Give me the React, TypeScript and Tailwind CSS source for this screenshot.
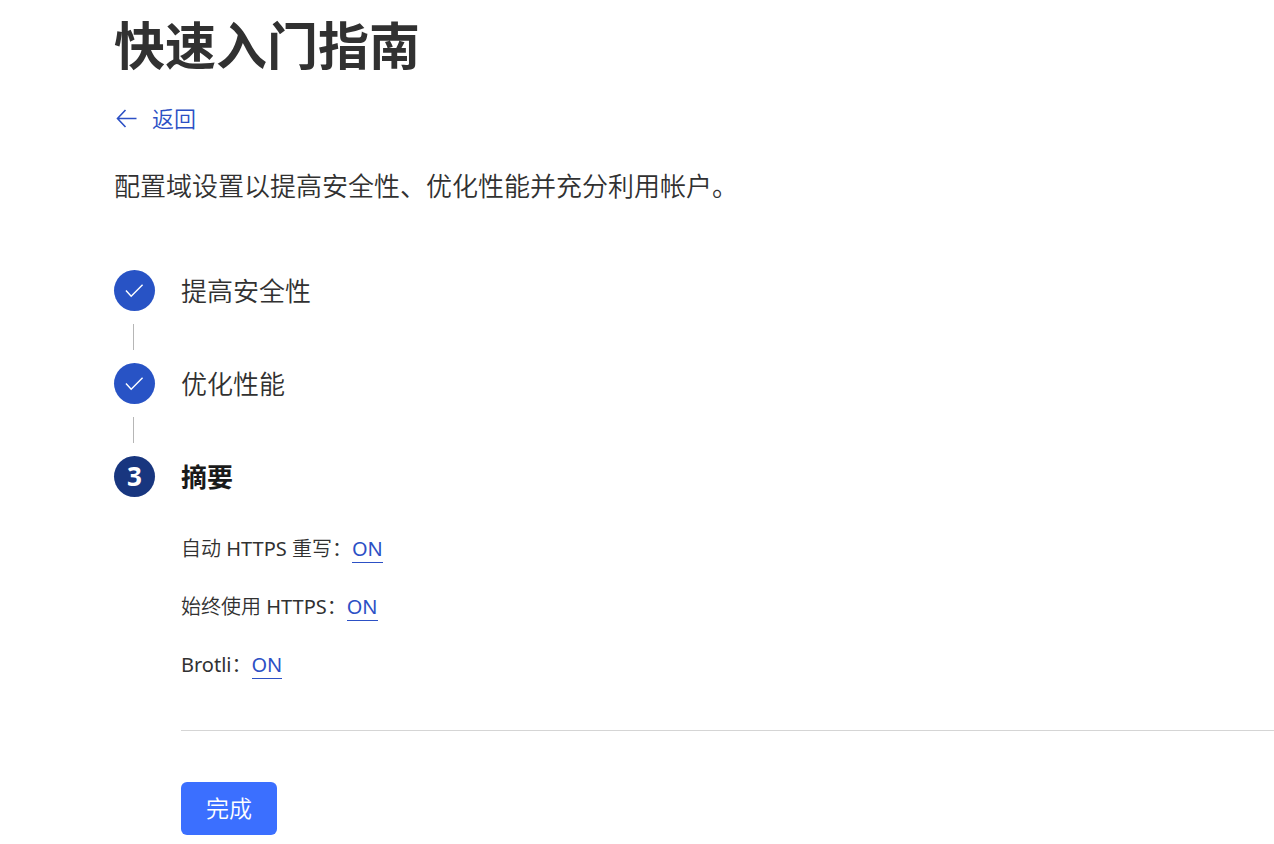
const steps = ["提高安全性", "优化性能"];

const summary = [
  { label: "自动 HTTPS 重写：", value: "ON" },
  { label: "始终使用 HTTPS：", value: "ON" },
  { label: "Brotli：", value: "ON" },
];

function ArrowLeftIcon() {
  return (
    <svg
      className="w-6 h-6"
      viewBox="0 0 24 24"
      fill="none"
      stroke="currentColor"
      strokeWidth="1.6"
      aria-hidden="true"
    >
      <path d="M22.5 12.500H3.500M11.500 4L3.500 12.500l8 8.500" />
    </svg>
  );
}

function CheckIcon() {
  return (
    <svg
      className="w-[19px] h-[19px]"
      viewBox="0 0 20 20"
      fill="none"
      stroke="currentColor"
      strokeWidth="1.5"
      aria-hidden="true"
    >
      <path d="M1 10l5.500 6L18.500 4" />
    </svg>
  );
}

export default function App() {
  return (
    <main className="bg-white pl-[114px] pt-3 pb-2 font-['Noto_Sans','Noto_Sans_CJK_SC_DemiLight','Noto_Sans_CJK_SC',sans-serif] text-[#313131]">
      <h1 className="font-['Noto_Sans','Noto_Sans_CJK_SC',sans-serif] text-[51px] leading-[66px] font-bold">
        快速入门指南
      </h1>

      <a
        href="#"
        className="mt-6 inline-flex items-center gap-[14px] text-[22px] leading-8 text-[#2c50c5]"
      >
        <ArrowLeftIcon />
        返回
      </a>

      <p className="mt-[30px] text-[26px] leading-10">
        配置域设置以提高安全性、优化性能并充分利用帐户。
      </p>

      <ol className="mt-16">
        {steps.map((step) => (
          <li key={step}>
            <div className="flex items-center gap-[26px]">
              <span className="flex w-[41px] h-[41px] items-center justify-center rounded-full bg-[#2853c5] text-white">
                <CheckIcon />
              </span>
              <span className="text-[26px] leading-10">{step}</span>
            </div>
            <div className="my-[13px] ml-[19px] h-[26px] w-px bg-[#b6b6b6]" />
          </li>
        ))}

        <li>
          <div className="flex items-center gap-[26px]">
            <span className="flex w-[41px] h-[41px] items-center justify-center rounded-full bg-[#18367f] text-[26px] font-bold text-white">
              3
            </span>
            <h2 className="font-['Noto_Sans','Noto_Sans_CJK_SC',sans-serif] text-[26px] leading-10 font-bold text-[#1a1a1a]">
              摘要
            </h2>
          </div>

          <div className="ml-[67px] mt-9">
            <ul className="flex flex-col gap-[26px] text-[20px] leading-8">
              {summary.map((item) => (
                <li key={item.label}>
                  {item.label}
                  <a href="#" className="border-b border-[#2c50c5] text-[#2c50c5]">
                    {item.value}
                  </a>
                </li>
              ))}
            </ul>

            <hr className="mt-[49px] border-[#d5d5d5]" />

            <button
              type="button"
              className="mt-[51px] h-[53px] rounded-md bg-[#3b6fff] px-[25px] text-[23px] text-white cursor-pointer"
            >
              完成
            </button>
          </div>
        </li>
      </ol>
    </main>
  );
}
